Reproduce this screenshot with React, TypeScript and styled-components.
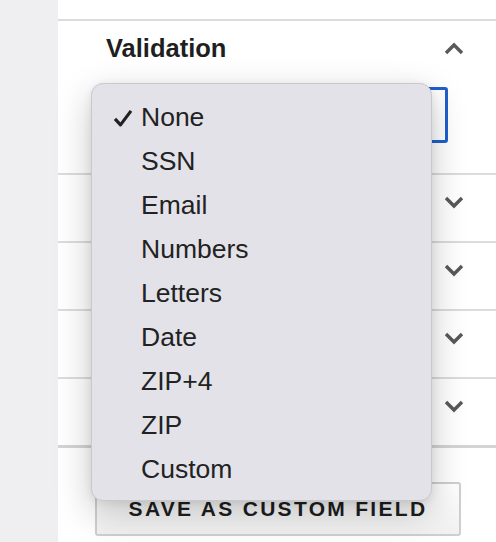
import React, { FC } from "react";
import styled, { createGlobalStyle } from "styled-components";

const GlobalStyle = createGlobalStyle`
    html, body {
        margin: 0;
        padding: 0;
        background: #ffffff;
        font-family: "Liberation Sans", Arial, sans-serif;
        overflow: hidden;
    }
`;

const Page = styled.div`
    display: flex;
    width: 496px;
    height: 542px;
    overflow: hidden;
`;

const Sidebar = styled.aside`
    width: 58px;
    flex: none;
    background: #efeef0;
`;

const Panel = styled.main`
    flex: 1;
    display: flex;
    flex-direction: column;
    background: #ffffff;
`;

const TopSpacer = styled.div`
    height: 19px;
    border-bottom: 2px solid #dcdcdc;
`;

const Section = styled.section<{ $last?: boolean }>`
    position: relative;
    padding: 0 32px 0 48px;
    border-bottom: ${(p) => (p.$last ? "3px solid #d4d4d4" : "2px solid #dcdcdc")};
`;

const SectionHeader = styled.div`
    height: 54px;
    display: flex;
    align-items: center;
    justify-content: space-between;
`;

const SectionTitle = styled.h3`
    margin: 0;
    font-size: 25.5px;
    font-weight: 700;
    color: #1f1f1f;
`;

const SectionBody = styled.div<{ $open?: boolean }>`
    padding: ${(p) => (p.$open ? "12px 16px 30px 0" : "0 0 12px 0")};
`;

const FieldWrap = styled.div`
    position: relative;
`;

const SelectBox = styled.div`
    height: 56px;
    box-sizing: border-box;
    border: 3px solid #1f5fd0;
    border-radius: 3px;
    background: #ffffff;
`;

const Menu = styled.ul`
    position: absolute;
    left: -15px;
    top: -4px;
    width: 341px;
    box-sizing: border-box;
    margin: 0;
    padding: 11px 0 9px;
    list-style: none;
    background: #e3e2e8;
    border: 1px solid #c9c8cd;
    border-radius: 12px;
    box-shadow: 0 12px 36px rgba(0, 0, 0, 0.22), 0 2px 8px rgba(0, 0, 0, 0.08);
    z-index: 10;
`;

const MenuItem = styled.li`
    position: relative;
    height: 44px;
    display: flex;
    align-items: center;
    padding-left: 49px;
    font-size: 26.5px;
    color: #222222;
`;

const Check = styled.span`
    position: absolute;
    left: 21px;
    top: 50%;
    transform: translateY(-45%);
    display: flex;
`;

const Footer = styled.footer`
    padding: 34px 35px 0 37px;
`;

const SaveButton = styled.button`
    width: 100%;
    height: 54px;
    border: 2px solid #cfcfcf;
    border-radius: 3px;
    background: linear-gradient(#ffffff, #f1f1f1);
    font-family: "Liberation Sans", Arial, sans-serif;
    font-size: 21px;
    font-weight: 700;
    letter-spacing: 2.3px;
    color: #1e1e1e;
`;

const Chevron: FC<{ up?: boolean }> = ({ up }) => (
    <svg width="20" height="13" viewBox="0 0 20 13">
        <path
            d={up ? "M2 11 L10 3 L18 11" : "M2 2 L10 10 L18 2"}
            fill="none"
            stroke="#595959"
            strokeWidth="3.4"
        />
    </svg>
);

const CheckMark = () => (
    <svg width="20" height="18" viewBox="0 0 20 18">
        <path d="M2 10 L7.5 16 L18 2" fill="none" stroke="#222" strokeWidth="3.2" strokeLinejoin="round" />
    </svg>
);

const options = ["None", "SSN", "Email", "Numbers", "Letters", "Date", "ZIP+4", "ZIP", "Custom"];

const App: FC = () => {
    return (
        <Page>
            <GlobalStyle />
            <Sidebar />
            <Panel>
                <TopSpacer />
                <Section>
                    <SectionHeader>
                        <SectionTitle>Validation</SectionTitle>
                        <Chevron up />
                    </SectionHeader>
                    <SectionBody $open>
                        <FieldWrap>
                            <SelectBox />
                            <Menu>
                                {options.map((o, i) => (
                                    <MenuItem key={o}>
                                        {i === 0 && (
                                            <Check>
                                                <CheckMark />
                                            </Check>
                                        )}
                                        {o}
                                    </MenuItem>
                                ))}
                            </Menu>
                        </FieldWrap>
                    </SectionBody>
                </Section>
                {[0, 1, 2, 3].map((i) => (
                    <Section key={i} $last={i === 3}>
                        <SectionHeader>
                            <span />
                            <Chevron />
                        </SectionHeader>
                        <SectionBody />
                    </Section>
                ))}
                <Footer>
                    <SaveButton>SAVE AS CUSTOM FIELD</SaveButton>
                </Footer>
            </Panel>
        </Page>
    );
};

export default App;
